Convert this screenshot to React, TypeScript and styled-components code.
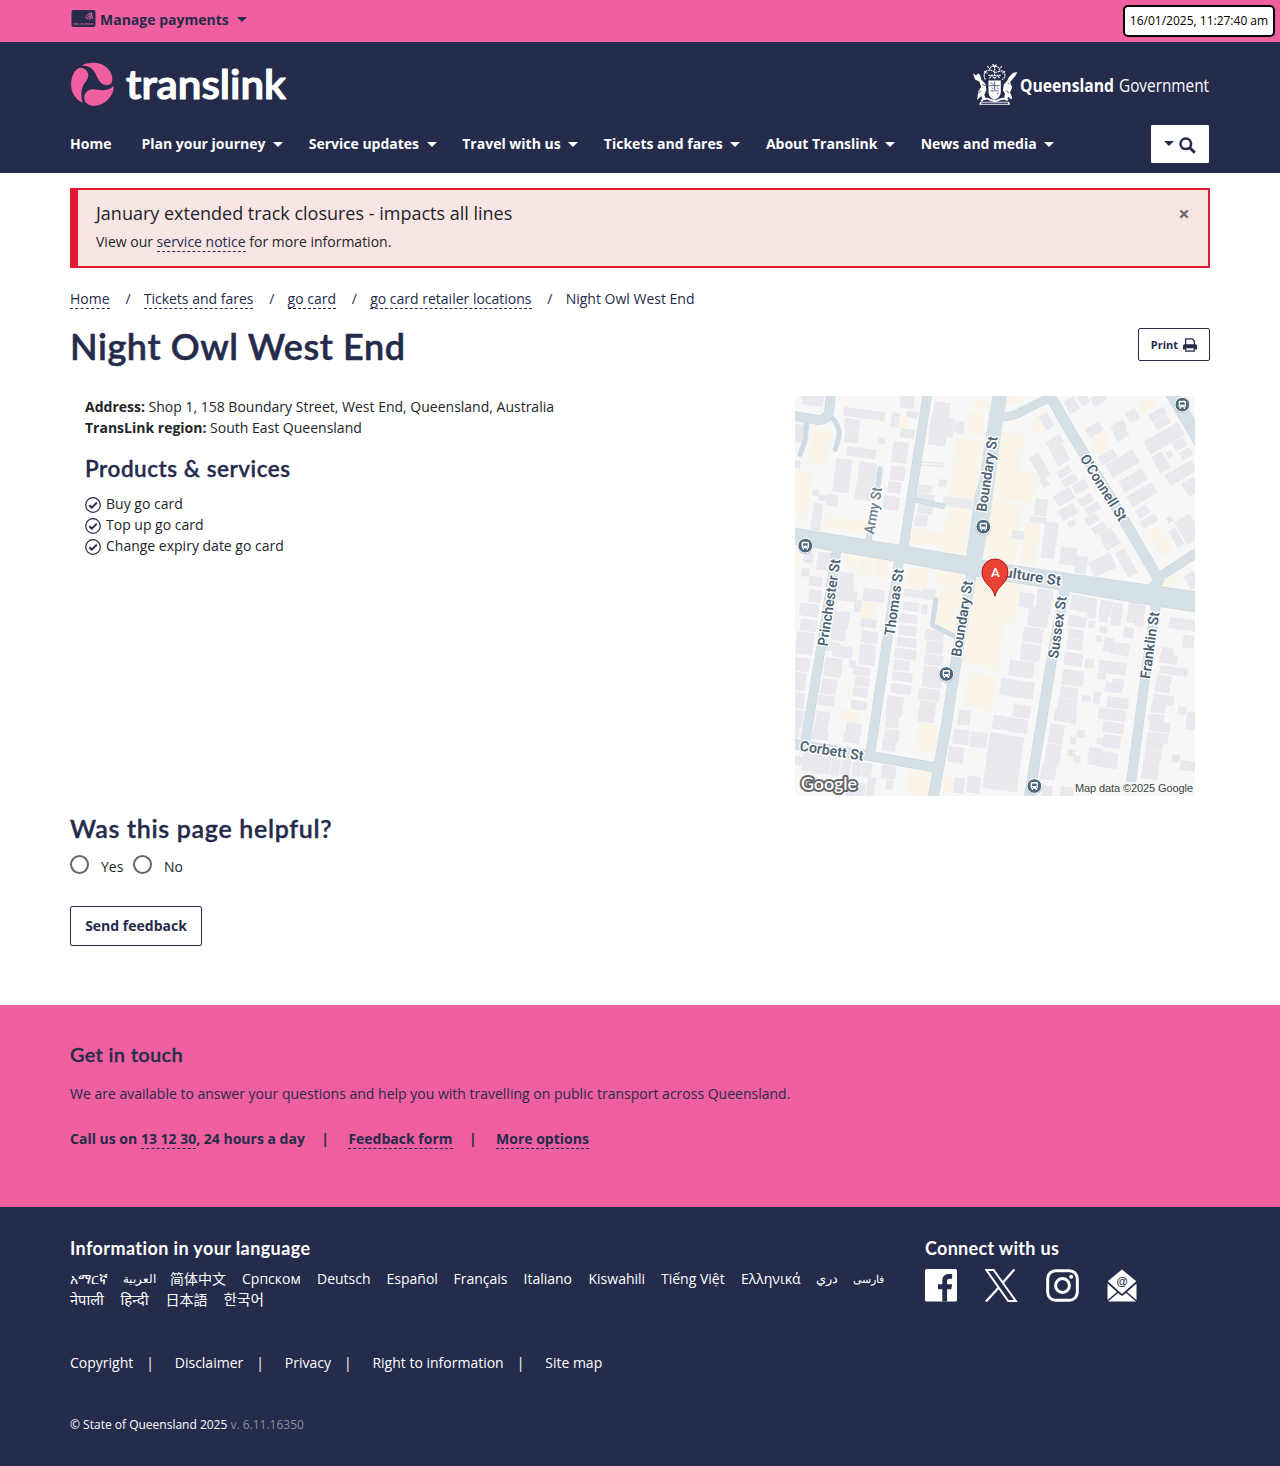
import React from "react";
import styled, { createGlobalStyle } from "styled-components";

const navy = "#252b4b";
const pink = "#f060a0";
const ink = "#212529";

const Global = createGlobalStyle`
  *, *::before, *::after { box-sizing: border-box; }
  body { margin: 0; background: #fff; color: ${ink}; font: 400 14px/21px "Open Sans", "Noto Sans", "Noto Sans CJK SC", sans-serif; }
  h1, h2, h3, p, ul, ol { margin: 0; padding: 0; }
  ul, ol { list-style: none; }
  a { color: inherit; text-decoration: none; }
  button { font: inherit; }
`;

const Container = styled.div`
  width: 1140px;
  margin: 0 auto;
`;

const TopBar = styled.div`
  position: relative;
  height: 42px;
  background: ${pink};
  color: ${navy};
`;

const PaymentsLink = styled.a`
  display: inline-flex;
  align-items: center;
  height: 38px;
  padding-left: 1px;
  font-weight: 700;
  svg { margin-right: 4px; }
`;

const Caret = styled.i<{ $gap?: number; $size?: number; $drop?: number }>`
  display: inline-block;
  width: 0;
  height: 0;
  margin-left: ${(p) => p.$gap ?? 7.6}px;
  margin-top: ${(p) => p.$drop ?? 2}px;
  border: ${(p) => p.$size ?? 5}px solid transparent;
  border-top-color: currentColor;
  border-bottom: 0;
`;

const Clock = styled.time`
  position: absolute;
  top: 5px;
  right: 5px;
  width: 152px;
  height: 32px;
  border: 2px solid #000;
  border-radius: 5px;
  background: #fff;
  color: #000;
  font-size: 12px;
  line-height: 28px;
  text-align: center;
  white-space: nowrap;
`;

const Header = styled.header`
  height: 131px;
  background: ${navy};
  color: #fff;
`;

const Brands = styled.div`
  display: flex;
  justify-content: space-between;
  height: 83px;
  padding-top: 18px;
  svg { overflow: visible; }
`;

const NavRow = styled.nav`
  display: flex;
  justify-content: space-between;
  padding-right: 1px;
`;

const NavList = styled.ul`
  display: flex;
  gap: 25.6px;
  padding-top: 8px;
`;

const NavItem = styled.li`
  display: flex;
  align-items: center;
  height: 21px;
  font-weight: 700;
  white-space: nowrap;
  &:first-child { margin-right: 4.4px; }
`;

const SearchButton = styled.button`
  display: flex;
  align-items: center;
  justify-content: center;
  gap: 5px;
  width: 58px;
  height: 38px;
  padding: 3px 0 0;
  border: 0;
  border-radius: 1px;
  background: #fff;
  color: ${navy};
`;

const Alert = styled.section`
  display: flex;
  justify-content: space-between;
  height: 80px;
  margin-top: 15px;
  padding: 10px 17px 0 18px;
  border: 2px solid #e31837;
  border-left-width: 8px;
  background: #f8e5e4;
`;

const AlertTitle = styled.h3`
  font-size: 18px;
  font-weight: 400;
  line-height: 27px;
  margin-bottom: 4px;
`;

const Close = styled.button`
  align-self: flex-start;
  width: 14px;
  height: 27px;
  padding: 0;
  border: 0;
  background: none;
  color: #666;
  font-size: 20px;
  font-weight: 700;
  line-height: 27px;
`;

const DashedLink = styled.a`
  display: inline-block;
  line-height: 19px;
  border-bottom: 1px dashed ${navy};
  color: ${navy};
`;

const Crumbs = styled.ol`
  display: flex;
  height: 22px;
  margin-top: 20px;
  color: ${navy};
  li + li::before {
    content: "/";
    padding: 0 13.2px 0 15.8px;
  }
`;

const TitleRow = styled.div`
  display: flex;
  justify-content: space-between;
  padding-top: 18px;
  height: 86px;
  h1 { margin-top: -3px; }
`;

const Heading = styled.h2<{ $size: number; $line: number; $track?: number; $light?: boolean }>`
  color: ${(p) => (p.$light ? "#fff" : navy)};
  font-family: Lato, "Open Sans", sans-serif;
  font-weight: ${(p) => (p.$light ? 700 : 600)};
  font-size: ${(p) => p.$size}px;
  line-height: ${(p) => p.$line}px;
  letter-spacing: ${(p) => p.$track ?? 0}px;
  -webkit-text-stroke: ${(p) => (p.$light ? 0 : p.$size / 70)}px currentColor;
  font-variant-ligatures: none;
  white-space: nowrap;
`;

const OutlineButton = styled.button<{ $w: number; $h: number; $size: number; $lift?: number }>`
  display: flex;
  align-items: center;
  justify-content: center;
  gap: 5px;
  width: ${(p) => p.$w}px;
  height: ${(p) => p.$h}px;
  padding: 0 0 ${(p) => p.$lift ?? 0}px;
  border: 1px solid ${navy};
  border-radius: 2px;
  background: #fff;
  color: ${navy};
  font-size: ${(p) => p.$size}px;
  font-weight: 700;
`;

const Columns = styled.div`
  display: flex;
  justify-content: space-between;
  height: 400px;
  padding: 0 15px;
`;

const Details = styled.div`
  h2 { margin: 16px 0 10px; }
`;

const Service = styled.li`
  display: flex;
  align-items: center;
  height: 21px;
  gap: 5px;
  svg { margin-top: 3px; }
`;

const MapFrame = styled.div`
  width: 400px;
  height: 400px;
  overflow: hidden;
  svg { display: block; }
`;

const Feedback = styled.form`
  height: 209px;
  padding-top: 16px;
`;

const Choices = styled.div`
  display: flex;
  gap: 9.5px;
  height: 62px;
  padding-top: 9px;
`;

const Choice = styled.label`
  display: flex;
  gap: 12px;
  padding-top: 3px;
`;

const Radio = styled.span`
  width: 19px;
  height: 19px;
  margin-top: -1px;
  border: 2px solid #666;
  border-radius: 50%;
  background: #fff;
`;

const Contact = styled.section`
  height: 202px;
  padding-top: 34px;
  background: ${pink};
  color: ${navy};
  p { margin-top: 14px; }
`;

const ContactLinks = styled.div`
  display: flex;
  align-items: baseline;
  margin-top: 24px;
  font-weight: 700;
`;

const Bar = styled.span<{ $l: number; $r: number }>`
  margin: 0 ${(p) => p.$r}px 0 ${(p) => p.$l}px;
`;

const Footer = styled.footer`
  height: 259px;
  padding-top: 29px;
  background: ${navy};
  color: #fff;
`;

const FooterTop = styled.div`
  display: grid;
  grid-template-columns: 855px 1fr;
  height: 116px;
`;

const Languages = styled.ul`
  display: flex;
  flex-wrap: wrap;
  column-gap: 16px;
  width: 825px;
  padding-top: 8px;
`;

const Language = styled.li<{ $w: number; $size?: number }>`
  width: ${(p) => p.$w}px;
  height: 21px;
  font-size: ${(p) => p.$size ?? 14}px;
  white-space: nowrap;
`;

const Social = styled.div`
  display: flex;
  gap: 28px;
  padding-top: 9px;
`;

const FooterLinks = styled.div`
  display: flex;
`;

const Copyright = styled.div`
  margin-top: 41px;
  font-size: 12px;
  span { color: #8d8f99; }
`;

/* ---------- icons ---------- */

const CardIcon = () => (
  <svg width="25" height="19" viewBox="0 0 25 19">
    <rect x="0.500" y="0" width="24" height="17" rx="2" fill={navy} />
    <path d="M2.500 14h5.500M9.500 14h3M13.500 14h9" stroke={pink} strokeWidth=".9" />
    <g fill="none" stroke={pink} strokeWidth=".8" transform="translate(0 -1) rotate(-12 20 10)">
      <path d="M15 8.500a5.500 5.500 0 0 1 7.500-3.800" />
      <path d="M16.500 9.500a4 4 0 0 1 5.500-3" />
      <path d="M18 10.300a2.500 2.500 0 0 1 4-1.800M21.500 3.500v7M19.500 5v5" />
    </g>
  </svg>
);

const TranslinkLogo = () => (
  <svg width="230" height="50" viewBox="0 0 230 50">
    <g fill={pink}>
      <path d="M11.500 5.400C20 .9 33 1.400 39.500 10.500c3 4.200 4 10.700 1.300 13.300-3 2.500-8 1.300-10.800-2C26.500 17 25.700 12 21 8 18 6 14.800 5.500 11.500 5.400Z" />
      <path d="M10.300 7.800c4-.2 7.500 3 8 7 .6 4.500-3.800 7.500-5.700 12.200-1.800 4.400-1.600 10 .1 15.800C5.500 39.500.8 32.300 1.100 24 1.400 15.500 5 8.500 10.300 7.800Z" />
      <path d="M43.900 25.400C43.800 35.500 36 44.300 25.500 45.700c-5.500.6-11-2.500-11.300-7.500-.3-5 3.600-8.600 8-8.900 4-.3 8.500 1.400 13 .8 3.700-.5 6.500-2.200 8.700-4.700Z" />
    </g>
    <text x="56" y="39" textLength="160" lengthAdjust="spacingAndGlyphs" fontFamily="Lato, sans-serif" fontWeight="600" fontSize="40" fill="#fff" stroke="#fff" strokeWidth="1.200" strokeLinejoin="round">translink</text>
  </svg>
);

const QueenslandLogo = () => (
  <svg width="240" height="50" viewBox="0 0 240 50">
    <g transform="translate(3 2) scale(1.030)" fill="#fff">
      <path d="M7 38.500h28l1 3H6ZM0 11l3 2 2-2 2 2 1 4 4 4 1 6-2 5 2 5H9l-1-4-4 4 1-8 3-5-2-5-4-2ZM43 10l-4 .5-4 4-2 4-3 3-1 6 2 3-1 6 3 1 1-4 3 3 1-2-2-5 2-5-2-5 5-6Z" />
      <path d="M15 18h12v11c0 5-4 7-6 8-3-1-6-4-6-8Z" />
      <path d="M8 38c4-5 8-1 13 0 4 0 8-5 13-1" fill="none" stroke="#fff" strokeWidth="1.800" />
      <path d="M16 23h10M21 19v8M17 28h8M17 20l3 2M23 31l2-1M18 25l2 1M23 25l2 1" stroke={navy} strokeWidth=".7" />
      <path d="M12 17c-3-5 0-9 4-9s4 2 6 2 6-3 8 0 1 6-2 7M17 6c0-3 7-3 8 0M19 2l2 2 2-2M14 4l3 4M28 4l-3 4M15 13h12M11 9l3 2M31 9l-3 2M16 16l2-3 3 3 3-3 2 3M21 4v9" fill="none" stroke="#fff" strokeWidth="1.100" strokeDasharray="2 .6" />
      <path d="M9 22l3 1M5 30l3-2M34 20l2 2M32 28l3 2" stroke={navy} strokeWidth=".7" />
      <path d="M8 40h26" stroke={navy} strokeWidth="1.200" />
    </g>
    <text x="50" y="32" textLength="94" lengthAdjust="spacingAndGlyphs" fill="#fff" fontFamily="'Open Sans', sans-serif" fontWeight="700" fontSize="18">Queensland</text>
    <text x="149" y="32" textLength="90" lengthAdjust="spacingAndGlyphs" fill="#fff" fontFamily="'Open Sans', sans-serif" fontWeight="400" fontSize="17.500">Government</text>
  </svg>
);

const SearchIcon = () => (
  <svg width="17" height="17" viewBox="0 0 17 17" fill="none" stroke={navy}>
    <circle cx="6.800" cy="6.800" r="5.300" strokeWidth="2.500" />
    <path d="M10.800 10.800l5 5" strokeWidth="3" />
  </svg>
);

const PrintIcon = () => (
  <svg width="14" height="14" viewBox="0 0 14 14">
    <path d="M2.600 7V.8h6.600l2.200 2.200V7" fill="#fff" stroke={navy} strokeWidth="1.300" />
    <path d="M0 11.500V8Q0 6.200 1.600 6.200H12.400Q14 6.200 14 8V11.500h-2.500V9.500h-9v2Z" fill={navy} />
    <path d="M2.800 9.700h8.400V13.200H2.800Z" fill="#fff" stroke={navy} strokeWidth="1.300" />
  </svg>
);

const CheckIcon = () => (
  <svg width="16" height="16" viewBox="0 0 16 16" fill="none" stroke={navy}>
    <circle cx="8" cy="8" r="7.300" strokeWidth="1.200" />
    <path d="M4.300 8.300l2.500 2.300 5-5" strokeWidth="2" />
  </svg>
);

const FacebookIcon = () => (
  <svg width="32" height="33" viewBox="0 0 32 33">
    <rect width="32" height="32.500" rx="1.500" fill="#fff" />
    <path d="M17.300 32.500V20.300H13v-5h4.300v-3.500c0-4.500 2.600-6.800 6.500-6.800 1.400 0 2.500.1 3.300.2v4.500h-2.500c-2.100 0-2.500 1-2.500 2.500v3.100H27l-.7 5h-4.200v12.200Z" fill={navy} />
  </svg>
);

const XIcon = () => (
  <svg width="33" height="33" viewBox="0 0 33 33" fill="none" stroke="#fff">
    <path d="M1.300 1h7.300l22.200 31h-7.600Z" strokeWidth="2" />
    <path d="M29.300.5 17.500 14M14 18.200 1 32.500" strokeWidth="2.300" />
  </svg>
);

const InstagramIcon = () => (
  <svg width="33" height="33" viewBox="0 0 33 33" fill="none" stroke="#fff" strokeWidth="3">
    <rect x="1.700" y="1.700" width="29.600" height="29.600" rx="8" />
    <circle cx="16.500" cy="16.500" r="6.900" />
    <circle cx="25.200" cy="7.800" r="2" fill="#fff" stroke="none" />
  </svg>
);

const MailIcon = () => (
  <svg width="30" height="33" viewBox="0 0 30 33">
    <path d="M15 .5 29 12v.5L15 25 1 12.500V12Z" fill="#fff" />
    <path d="M.5 14.500 10 23 .5 31ZM29.500 14.500 20 23l9.500 8ZM1 32.500 11 24l4 3 4-3 10 8.500Z" fill="#fff" />
    <text x="15" y="16.300" textAnchor="middle" fontFamily="'Liberation Sans', sans-serif" fontWeight="700" fontSize="11.500" fill={navy}>@</text>
  </svg>
);

/* ---------- street map, drawn at three units per pixel ---------- */

type Block = [number, number, number, number, number?];

const shift = (dx: number, dy: number, tilt: number, list: Block[]): Block[] =>
  list.map(([x, y, w, h, r]) => [x + dx, y + dy, w, h, r ?? tilt]);

const shops: Block[] = [
  ...shift(0, 0, 8, [[327,82,30,32],[62,120,56,98],[10,240,50,140],[100,372,24,45],[130,388,100,36],[530,100,50,36],[532,68,50,30],[552,30,50,26],[487,148,80,180],[465,350,68,140],[352,422,110,40],[580,330,60,170],[160,488,36,40],[206,500,40,55],[255,505,40,55],[350,535,65,65],[440,530,75,60],[560,540,70,90],[10,490,18,50]]),
  ...shift(600, 0, -30, [[125,88,36,42],[448,28,50,30],[306,130,46,30],[318,158,36,28],[474,418,42,36],[498,454,42,38],[506,568,60,18]]),
  ...shift(600, 0, 8, [[52,10,40,28],[30,130,65,120],[0,240,140,90],[0,340,85,200],[98,400,46,122],[-20,570,110,60]]),
  ...shift(0, 600, 8, [[214,36,44,54],[150,358,58,36],[442,0,65,120],[382,402,60,80],[352,540,62,90],[520,70,115,155],[526,254,84,100],[462,558,28,48],[540,-20,90,110]]),
  ...shift(600, 600, 8, [[-20,0,104,90],[0,95,22,42],[0,200,26,45],[-5,265,18,100]]),
];

const houses: Block[] = [
  ...shift(0, 0, 8, [[38,10,62,36],[12,105,28,50],[162,60,122,24],[332,10,40,44],[350,65,33,17],[305,70,22,40],[332,118,40,25],[165,88,44,30],[165,122,38,35],[172,175,84,26],[267,145,17,17],[308,158,44,60],[302,230,42,40],[295,276,37,32],[282,320,44,38],[134,208,46,98],[202,218,50,112],[68,300,18,17],[86,316,24,16],[110,314,32,32],[68,340,26,80],[15,215,15,18],[432,38,46,44],[420,82,70,56],[495,95,26,32],[416,135,50,30],[448,270,20,20],[388,287,36,20],[380,312,52,24],[460,325,86,26],[385,345,42,26],[376,376,36,32],[42,488,26,30],[82,488,40,52],[35,536,22,22],[58,560,38,28],[146,548,44,28],[130,575,60,24],[220,598,50,32],[395,598,40,30]]),
  ...shift(600, 0, -30, [[230,26,32,40],[268,14,26,30],[305,14,42,26],[157,72,26,44],[290,105,46,28],[365,98,42,24],[375,120,38,26],[412,62,30,30],[478,62,50,22],[494,86,44,24],[464,124,118,42],[496,190,34,54],[530,184,16,16],[550,150,36,26],[572,180,34,22],[528,232,90,34],[584,268,40,45],[328,188,50,26],[352,200,92,42],[390,254,78,36],[414,297,84,34],[440,352,36,26],[452,382,50,22],[532,382,15,15],[548,415,22,56],[570,380,50,75],[172,144,46,25],[185,172,40,24],[198,196,38,24],[134,192,30,72],[153,264,20,26],[202,236,42,20],[218,260,44,22],[250,276,42,28],[196,304,54,34],[210,350,48,32],[234,394,22,13],[268,318,40,24],[288,344,42,22],[288,378,36,22],[308,404,38,23],[332,422,38,24],[340,444,46,28],[302,502,70,46,-24],[394,478,30,82],[592,550,30,45]]),
  ...shift(600, 0, 8, [[135,328,36,48],[122,382,48,16],[160,398,38,106],[68,424,34,22],[212,474,46,50],[256,500,34,50],[144,600,44,30],[90,610,40,22]]),
  ...shift(0, 600, 8, [[58,0,35,36],[30,42,55,36],[32,90,48,32],[22,128,50,28],[18,158,50,34],[12,205,46,38],[12,250,34,50],[12,310,30,45],[12,362,26,50],[10,415,16,28],[140,2,60,30],[130,65,45,50],[122,110,44,40],[108,158,40,25],[130,170,56,32],[104,205,50,55],[95,268,44,44],[85,318,48,28],[80,366,38,30],[75,395,38,30],[66,425,48,24],[194,30,18,35],[222,0,60,34],[214,88,44,24],[214,125,48,34],[210,165,46,28],[208,196,46,28],[178,212,18,22],[192,232,48,24],[196,262,40,26],[190,294,42,26],[184,334,46,24],[170,400,44,30],[162,428,46,30],[342,0,50,20],[340,38,46,24],[330,74,50,24],[328,108,50,28],[322,144,56,26],[314,178,64,28],[312,212,46,28],[308,248,58,25],[302,284,60,26],[290,320,48,58],[288,380,36,32],[284,420,42,30],[278,450,38,32],[394,45,18,26],[406,122,54,28],[410,155,48,34],[404,195,54,30],[400,230,46,30],[398,262,56,30],[388,298,60,32],[390,335,46,32],[386,362,46,34],[15,500,20,24],[38,482,26,60],[66,490,26,60],[94,495,26,55],[125,500,24,56],[155,505,26,50],[188,510,26,48],[218,520,26,40],[275,528,42,38],[290,572,18,26],[232,562,22,54],[200,580,24,36],[170,595,24,30],[505,362,34,42],[490,420,46,42],[542,428,48,44],[476,472,44,44],[590,430,40,165],[492,564,30,44],[532,560,38,48],[610,378,22,38]]),
  ...shift(600, 600, 8, [[90,12,40,40],[140,0,44,70],[116,52,58,58],[100,114,58,42],[94,164,56,48],[58,214,72,46],[32,272,98,48],[70,346,50,36],[10,380,52,38],[62,388,50,40],[0,436,90,164],[244,16,32,44],[270,22,26,44],[296,26,22,58],[330,32,34,44],[328,76,24,20],[366,40,28,66],[414,38,26,60],[438,46,24,62],[236,80,52,30],[296,94,18,18],[330,110,20,18],[320,138,16,16],[402,114,28,28],[236,120,44,26],[232,150,44,28],[342,145,26,40],[366,160,50,34],[224,190,52,36],[286,208,26,24],[328,216,80,34],[322,250,24,18],[218,242,62,44],[346,280,50,26],[368,268,32,24],[212,292,50,32],[276,318,24,16],[312,308,18,32],[352,324,62,30],[204,328,56,34],[194,364,64,32],[326,358,80,32],[340,398,60,30],[340,436,50,36],[320,446,20,16],[262,420,22,22],[242,442,16,18],[236,480,18,18],[252,498,18,18],[296,474,38,50],[320,488,62,44],[178,404,42,56],[168,464,42,58],[154,524,42,44],[155,588,30,40],[212,592,36,36],[538,88,78,30],[580,138,30,34],[516,174,34,20],[510,194,50,26],[510,232,82,22],[502,258,42,20],[496,276,42,30],[490,316,60,26],[484,342,42,26],[476,374,46,20],[478,396,60,28],[472,430,62,26],[468,456,48,24],[466,484,46,26],[460,512,46,26],[456,538,48,28],[564,352,24,20],[590,368,32,50],[548,496,20,20],[572,514,50,28]]),
];

const lanes: [string, number][] = [
  ["M50 92L46 150L30 194", 15],
  ["M124 80Q154 112 146 145L136 178", 15],
  ["M270 238L262 300", 17],
  ["M437 630L427 705L500 742", 15],
];

const streets: [string, number][] = [
  ["M0 76L85 90Q112 90 117 65L124 0", 27],
  ["M414 0L338 490", 26],
  ["M244 400L232 475", 17],
  ["M378 330L465 350", 14],
  ["M770 0L845 130L1025 430L1106 568L1086 602", 30],
  ["M1100 566L1230 482", 26],
  ["M640 82Q680 76 700 62L785 20", 24],
  ["M1140 0L1250 188", 38],
  ["M140 480L92 780L44 1064", 26],
  ["M332 480L293 740L240 1095", 27],
  ["M0 1060L240 1098L435 1132", 28],
  ["M548 530L500 800L470 1000L428 1230", 30],
  ["M828 580L785 810L716 1230", 29],
  ["M1101 625L1065 865L1016 1230", 27],
];

const labels: [string, number, number, number, number][] = [
  ["Army St", 250, 362, 142, -80],
  ["Boundary St", 592, 252, 228, -81.5],
  ["Princhester St", 118, 638, 264, -81.5],
  ["Thomas St", 313, 637, 202, -82],
  ["Boundary St", 517, 686, 230, -81],
  ["Vulture St", 714, 558, 200, 9],
  ["O'Connell St", 940, 293, 226, 58],
  ["Sussex St", 803, 712, 188, -82],
  ["Franklin St", 1080, 766, 202, -82],
  ["Corbett St", 125, 1083, 192, 9],
];

const stops: [number, number][] = [[580, 410], [46, 467], [1177, 44], [469, 852], [733, 1188]];

const Blocks = ({ list, fill, edge }: { list: Block[]; fill: string; edge: string }) => (
  <g fill={fill} stroke={edge} strokeWidth="1.500">
    {list.map(([x, y, w, h, r], i) => (
      <rect key={i} x={x} y={y} width={w} height={h} transform={`rotate(${r} ${x + w / 2} ${y + h / 2})`} />
    ))}
  </g>
);

const StreetMap = () => (
  <svg width="400" height="400" viewBox="0 0 400 400">
    <rect width="400" height="400" fill="#f7f7f7" />
    <g transform="translate(-5 -6) scale(.33333)">
      <Blocks list={shops} fill="#faf5e8" edge="#faf5e8" />
      <Blocks list={houses} fill="#e8e9ee" edge="#e1e2e8" />
      <path d="M395 216L458 220V229L393 225Z" fill="#f7f7f7" stroke="#dcdfe5" strokeWidth="3" />
      <g fill="none" stroke="#cfdbe4" strokeLinecap="round" strokeLinejoin="round">
        {lanes.map(([d, w]) => <path key={d} d={d} strokeWidth={w} />)}
      </g>
      <g fill="none" stroke="#c6d3dc" strokeLinejoin="round">
        {streets.map(([d, w]) => <path key={d} d={d} strokeWidth={w + 2} />)}
      </g>
      <path d="M0 412L330 466L530 500L640 522L900 560L1230 607V668L1050 640L840 605L640 572L520 551L300 511L0 460Z" fill="#d6e0e7" stroke="#c6d3dc" strokeWidth="2" />
      <path d="M609 0H654L640 90L600 380L573 530L527 510L553 320L567 270Z" fill="#d6e0e7" />
      <g fill="none" stroke="#d6e0e7" strokeLinejoin="round">
        {streets.map(([d, w]) => <path key={d} d={d} strokeWidth={w - 1} />)}
      </g>
      {labels.map(([name, x, y, length, turn], i) => (
        <text key={i} transform={`translate(${x} ${y}) rotate(${turn})`} y="14" textAnchor="middle" textLength={length} lengthAdjust="spacingAndGlyphs" fontFamily="Roboto, sans-serif" fontWeight="600" fontSize="43" fill={i === 0 ? "#71828f" : "#4b6273"} stroke="#fff" strokeWidth="8" strokeLinejoin="round" paintOrder="stroke">{name}</text>
      ))}
      {stops.map(([x, y]) => (
        <g key={x} transform={`translate(${x} ${y})`}>
          <circle r="24" cy="2" fill="#b9c1c8" />
          <circle r="22" fill="#4d677b" stroke="#fff" strokeWidth="3" />
          <path d="M-11 7V-8Q-11 -12-7 -12H7Q11 -12 11 -8V7H8V12H4V8H-4V12H-8V7Z" fill="#fff" />
          <path d="M-7 -7H7V0H-7Z" fill="#4d677b" />
          <circle cx="-6" cy="4" r="1.800" fill="#4d677b" />
          <circle cx="6" cy="4" r="1.800" fill="#4d677b" />
        </g>
      ))}
      <path d="M615 619C610 588 576 582 576 546A39 39 0 0 1 654 546C654 582 620 588 615 619Z" fill="#ea4335" stroke="#b31412" strokeWidth="3" />
      <text x="616" y="560" textAnchor="middle" fontFamily="Roboto, sans-serif" fontWeight="500" fontSize="40" fill="#fff">A</text>
    </g>
    <text x="6" y="394" textLength="56" lengthAdjust="spacingAndGlyphs" fontFamily="Lato, sans-serif" fontWeight="600" fontSize="18" fill="#fff" stroke="#666" strokeWidth="4" strokeLinejoin="round" paintOrder="stroke">Google</text>
    <rect x="278" y="386" width="122" height="14" fill="#f7f7f7" opacity=".85" />
    <text x="398" y="396" textAnchor="end" textLength="118" fontFamily="'Liberation Sans', sans-serif" fontSize="11" fill="#444">Map data ©2025 Google</text>
  </svg>
);

const nav = ["Home", "Plan your journey", "Service updates", "Travel with us", "Tickets and fares", "About Translink", "News and media"];
const crumbs = ["Home", "Tickets and fares", "go card", "go card retailer locations"];
const services = ["Buy go card", "Top up go card", "Change expiry date go card"];
const languages: [string, number, number?][] = [
  ["አማርኛ", 37], ["العربية", 31, 12], ["简体中文", 56], ["Српском", 59], ["Deutsch", 53.500], ["Español", 51], ["Français", 54],
  ["Italiano", 49], ["Kiswahili", 56.500], ["Tiếng Việt", 64], ["Ελληνικά", 59], ["دري", 21, 12.5], ["فارسی", 32, 11],
  ["नेपाली", 34.500, 14.6], ["हिन्दी", 29, 14.9], ["日本語", 42], ["한국어", 42, 14.7],
];
const legal = ["Copyright", "Disclaimer", "Privacy", "Right to information", "Site map"];

export default function App() {
  return (
    <>
      <Global />
      <TopBar>
        <Container>
          <PaymentsLink href="#"><CardIcon />Manage payments<Caret $gap={8} $drop={1} /></PaymentsLink>
        </Container>
        <Clock>16/01/2025, 11:27:40 am</Clock>
      </TopBar>
      <Header>
        <Container>
          <Brands>
            <TranslinkLogo />
            <QueenslandLogo />
          </Brands>
          <NavRow>
            <NavList>
              {nav.map((name, i) => <NavItem key={name}>{name}{i > 0 && <Caret />}</NavItem>)}
            </NavList>
            <SearchButton aria-label="Search"><Caret $gap={0} $size={5} $drop={-4} /><SearchIcon /></SearchButton>
          </NavRow>
        </Container>
      </Header>
      <Container as="main">
        <Alert>
          <div>
            <AlertTitle>January extended track closures - impacts all lines</AlertTitle>
            <p>View our <DashedLink href="#">service notice</DashedLink> for more information.</p>
          </div>
          <Close aria-label="Close">×</Close>
        </Alert>
        <Crumbs>
          {crumbs.map((name) => <li key={name}><DashedLink href="#">{name}</DashedLink></li>)}
          <li>Night Owl West End</li>
        </Crumbs>
        <TitleRow>
          <Heading as="h1" $size={36} $line={42} $track={0.57}>Night Owl West End</Heading>
          <OutlineButton $w={72} $h={33} $size={11}>Print<PrintIcon /></OutlineButton>
        </TitleRow>
        <Columns>
          <Details>
            <p><b>Address:</b> Shop 1, 158 Boundary Street, West End, Queensland, Australia</p>
            <p><b>TransLink region:</b> South East Queensland</p>
            <Heading $size={22.5} $line={29} $track={0.53}>Products &amp; services</Heading>
            <ul>
              {services.map((name) => <Service key={name}><CheckIcon />{name}</Service>)}
            </ul>
          </Details>
          <MapFrame><StreetMap /></MapFrame>
        </Columns>
        <Feedback>
          <Heading $size={25} $line={32} $track={0.67}>Was this page helpful?</Heading>
          <Choices>
            <Choice><Radio />Yes</Choice>
            <Choice><Radio />No</Choice>
          </Choices>
          <OutlineButton type="button" $w={132} $h={40} $size={14} $lift={2}>Send feedback</OutlineButton>
        </Feedback>
      </Container>
      <Contact>
        <Container>
          <Heading as="h3" $size={20} $line={30} $track={0.32}>Get in touch</Heading>
          <p>We are available to answer your questions and help you with travelling on public transport across Queensland.</p>
          <ContactLinks>
            <span>Call us on <DashedLink href="#">13 12 30</DashedLink>, 24 hours a day</span>
            <Bar $l={16.5} $r={19.3}>|</Bar>
            <DashedLink href="#">Feedback form</DashedLink>
            <Bar $l={16.5} $r={19.3}>|</Bar>
            <DashedLink href="#">More options</DashedLink>
          </ContactLinks>
        </Container>
      </Contact>
      <Footer>
        <Container>
          <FooterTop>
            <div>
              <Heading as="h3" $light $size={18} $line={24} $track={0.4}>Information in your language</Heading>
              <Languages>
                {languages.map(([name, w, size]) => <Language key={name} $w={w} $size={size}>{name}</Language>)}
              </Languages>
            </div>
            <div>
              <Heading as="h3" $light $size={18} $line={24} $track={0.3}>Connect with us</Heading>
              <Social><FacebookIcon /><XIcon /><InstagramIcon /><MailIcon /></Social>
            </div>
          </FooterTop>
          <FooterLinks>
            {legal.map((name, i) => (
              <React.Fragment key={name}>
                {i > 0 && <Bar $l={13} $r={20.8}>|</Bar>}
                <a href="#">{name}</a>
              </React.Fragment>
            ))}
          </FooterLinks>
          <Copyright>© State of Queensland 2025 <span>v. 6.11.16350</span></Copyright>
        </Container>
      </Footer>
    </>
  );
}
